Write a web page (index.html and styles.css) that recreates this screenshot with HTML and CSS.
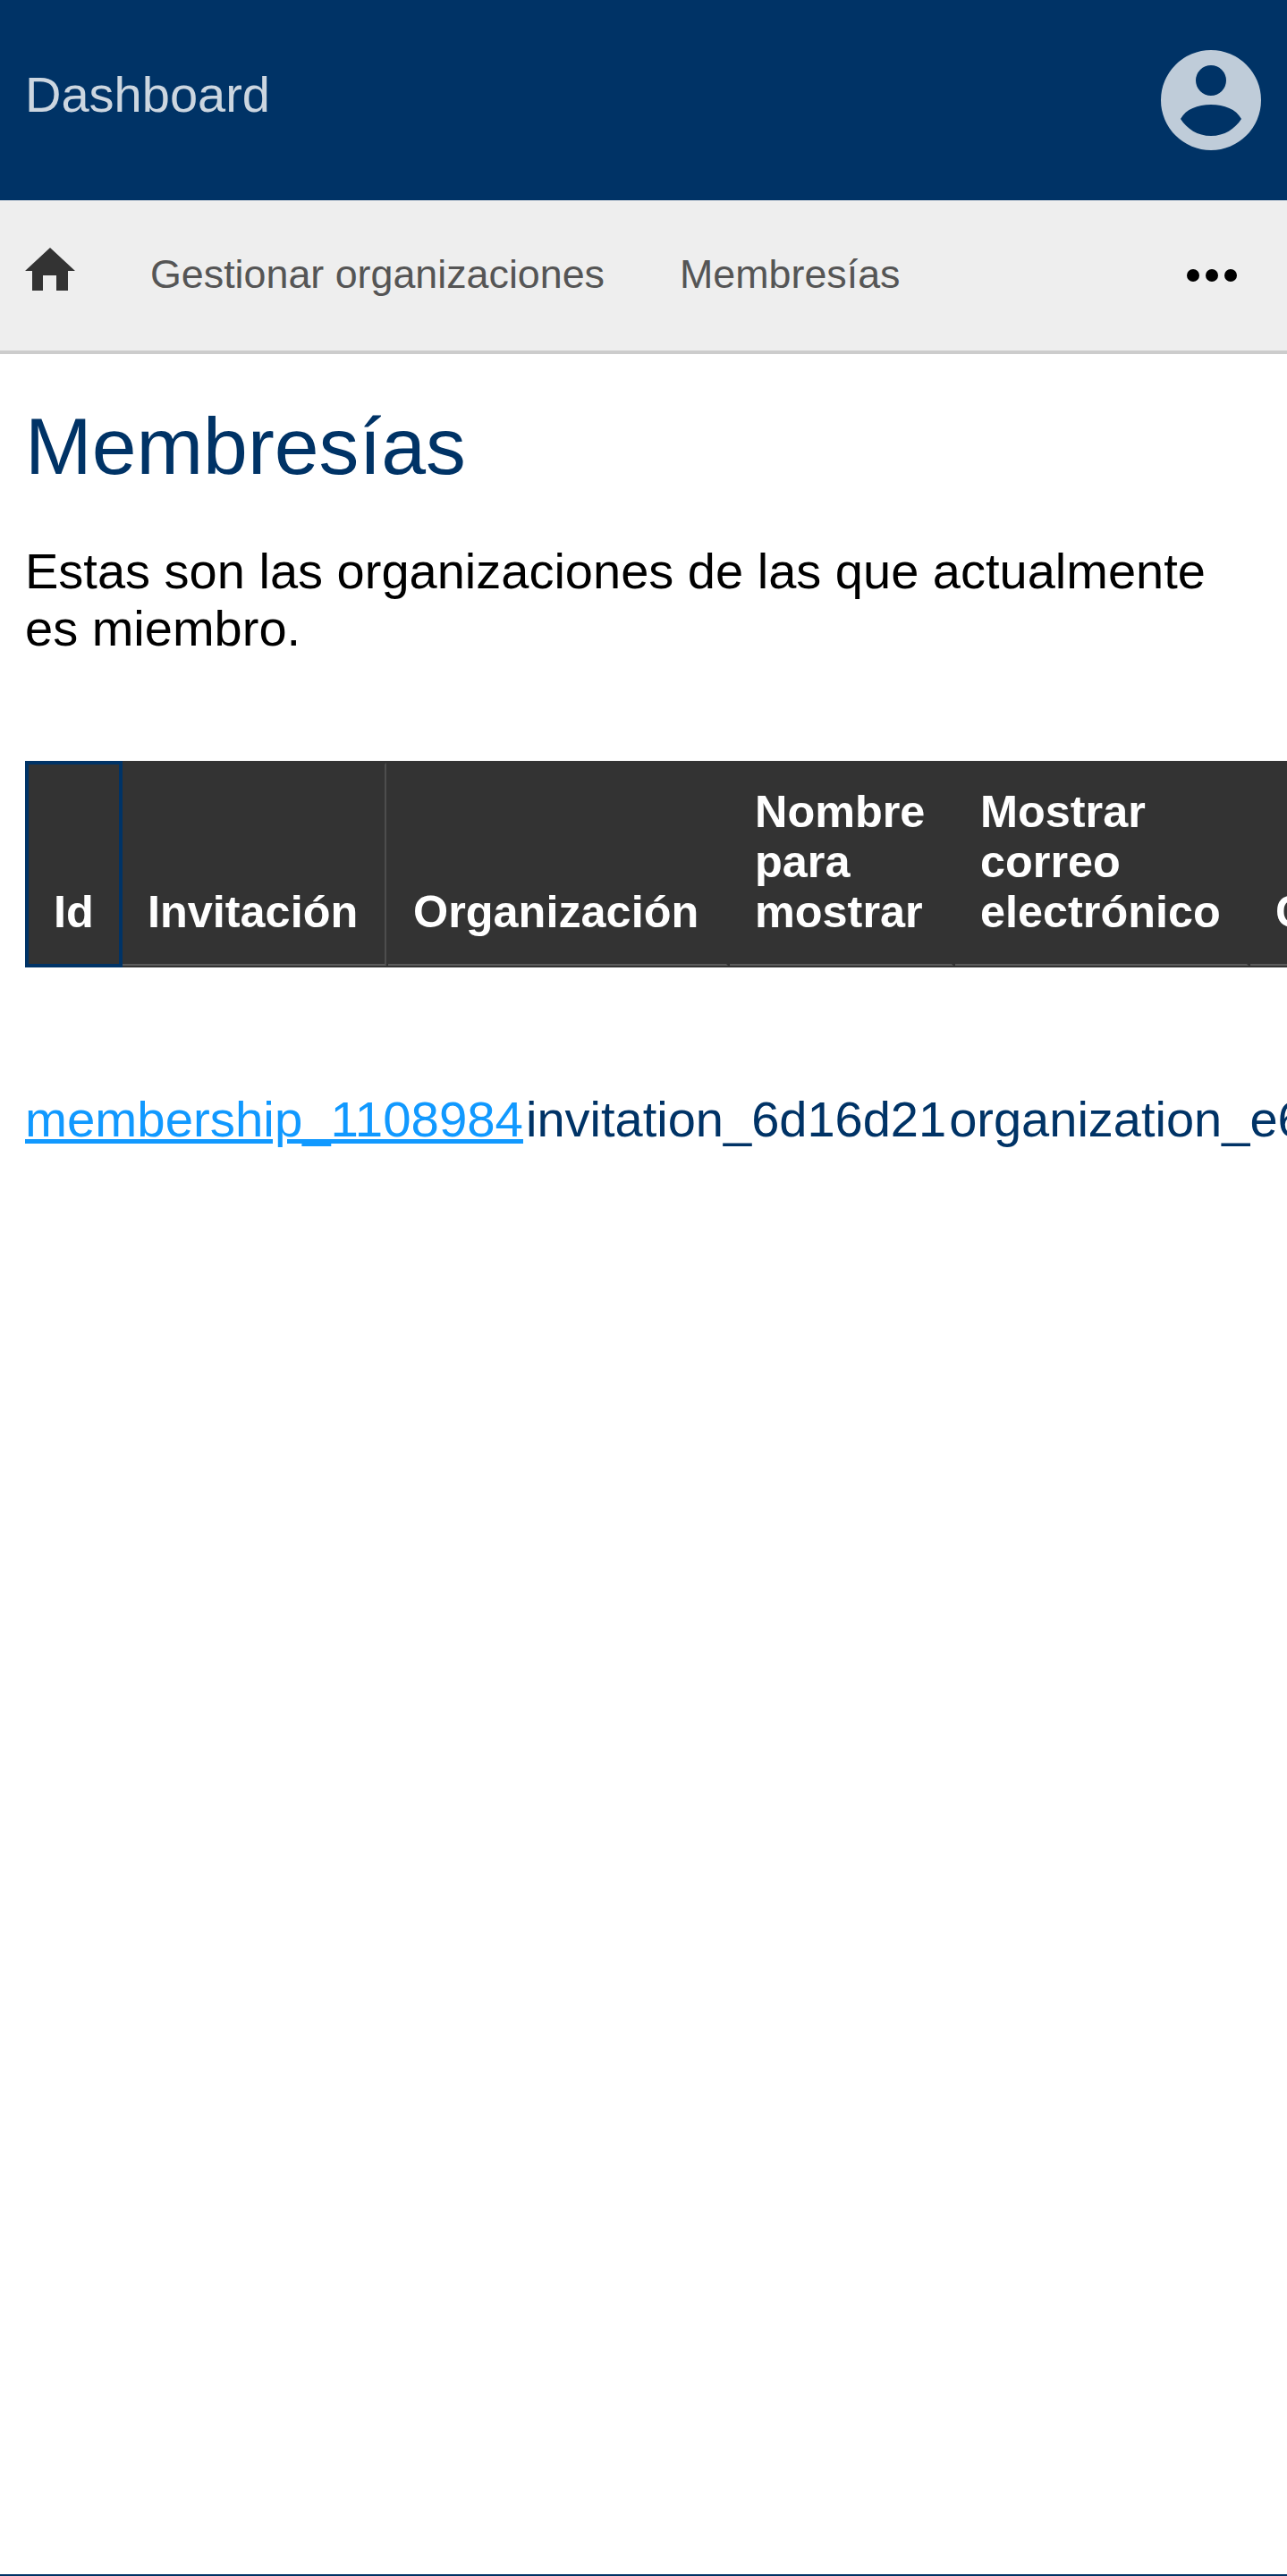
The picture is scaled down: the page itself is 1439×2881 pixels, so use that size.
FILE: index.html
```html
<!DOCTYPE html>
<html lang="es">

<head>
    <title>Membresías</title>
    <link rel="stylesheet" href="styles.css">
</head>

<body>
    <header class="top-bar">
        <a class="brand" href="#">Dashboard</a>
        <svg class="avatar" viewBox="0 0 112 112" aria-hidden="true">
            <path fill-rule="evenodd" d="M56 0a56 56 0 1 0 0 112a56 56 0 1 0 0-112zM56 17a17 17 0 1 1 0 34a17 17 0 1 1 0-34zM56 61c15 0 28 5 34 16c-7 11-19 19-34 19s-27-8-34-19c6-11 19-16 34-16z" />
        </svg>
    </header>

    <nav class="menu">
        <a class="home-link" href="#">
            <svg class="home-icon" viewBox="0 0 56 48" aria-hidden="true">
                <path d="M28 0L56 26H48V48H35V31H20V48H8V26H0z" />
            </svg>
        </a>
        <a class="menu-link" href="#">Gestionar organizaciones</a>
        <a class="menu-link" href="#">Membresías</a>
        <button class="more-btn" type="button" aria-label="Más">
            <svg class="more-icon" viewBox="0 0 56 14" aria-hidden="true">
                <circle cx="7" cy="7" r="7" />
                <circle cx="28" cy="7" r="7" />
                <circle cx="49" cy="7" r="7" />
            </svg>
        </button>
    </nav>

    <main class="content">
        <h1>Membresías</h1>
        <p class="intro">Estas son las organizaciones de las que actualmente es miembro.</p>

        <div class="table-wrap">
            <table class="list-head">
                <thead>
                    <tr>
                        <th class="col-id">Id</th>
                        <th class="col-invitation">Invitación</th>
                        <th class="col-organization">Organización</th>
                        <th class="col-name">Nombre para mostrar</th>
                        <th class="col-email">Mostrar correo electrónico</th>
                        <th class="col-created">Creado</th>
                    </tr>
                </thead>
            </table>
            <table class="list-body">
                <tbody>
                    <tr>
                        <td><a href="#">membership_1108984</a></td>
                        <td>invitation_6d16d21</td>
                        <td>organization_e6f3a90</td>
                    </tr>
                </tbody>
            </table>
        </div>
    </main>

    <footer class="page-foot"></footer>
</body>

</html>
```

FILE: styles.css
```css
* {
    box-sizing: border-box;
}

html,
body {
    margin: 0;
    height: 100%;
}

body {
    display: flex;
    flex-direction: column;
    min-height: 2881px;
    font-family: "Liberation Sans", Arial, sans-serif;
    font-size: 56px;
    color: #000;
    background-color: #fff;
}

.top-bar {
    display: flex;
    align-items: center;
    justify-content: space-between;
    height: 224px;
    padding: 0 29px 0 28px;
    background-color: #003366;
}

.brand {
    margin-bottom: 14px;
    color: #ccd6e0;
    text-decoration: none;
}

.avatar {
    width: 112px;
    height: 112px;
    fill: #bfccd9;
}

.menu {
    display: flex;
    align-items: center;
    height: 172px;
    padding: 0 29px 0 28px;
    background-color: #eeeeee;
    border-bottom: 4px solid #cccccc;
}

.home-link {
    display: flex;
    margin: 0 84px 14px 0;
}

.home-icon {
    width: 56px;
    height: 48px;
    fill: #333333;
}

.menu-link {
    margin: 0 84px 4px 0;
    font-size: 44.8px;
    color: #555555;
    text-decoration: none;
}

.more-btn {
    display: flex;
    margin-left: auto;
    padding: 0 27px;
    border: none;
    background: none;
}

.more-icon {
    width: 56px;
    height: 14px;
}

.content {
    flex: 1;
    padding: 0 0 0 28px;
    overflow: hidden;
}

h1 {
    margin: 50px 0 0;
    font-size: 89.6px;
    font-weight: normal;
    line-height: 1.2;
    color: #003366;
}

.intro {
    margin: 53px 28px 0 0;
    line-height: 64px;
}

.table-wrap {
    margin-top: 116px;
    overflow: hidden;
}

.list-head {
    border-collapse: separate;
    border-spacing: 2px;
    background-color: #333333;
    color: #fff;
    font-size: 50.4px;
    line-height: 56px;
    table-layout: fixed;
    width: 1500px;
}

.list-head th {
    height: 227px;
    padding: 0 0 30px 28px;
    text-align: left;
    vertical-align: bottom;
    border-top: 2px solid #333333;
    border-right: 2px solid #333333;
    border-bottom: 2px solid #5c5c5c;
}

.list-head .col-id {
    padding-left: 30px;
    outline: 4px solid #003366;
    outline-offset: -2px;
    border-right: none;
}

.col-id {
    width: 105px;
}

.list-head .col-invitation {
    width: 295px;
    border-right-color: #4d4d4d;
}

.col-organization {
    width: 380px;
}

.col-name {
    width: 250px;
}

.col-email {
    width: 328px;
}

.list-body {
    margin-top: 137px;
    border-collapse: collapse;
    color: #003366;
    white-space: nowrap;
}

.list-body td {
    padding: 0 3px 0 0;
}

.list-body a {
    font-size: 56.4px;
    color: #1199ff;
}

.page-foot {
    height: 2px;
    background-color: #003366;
}
```
